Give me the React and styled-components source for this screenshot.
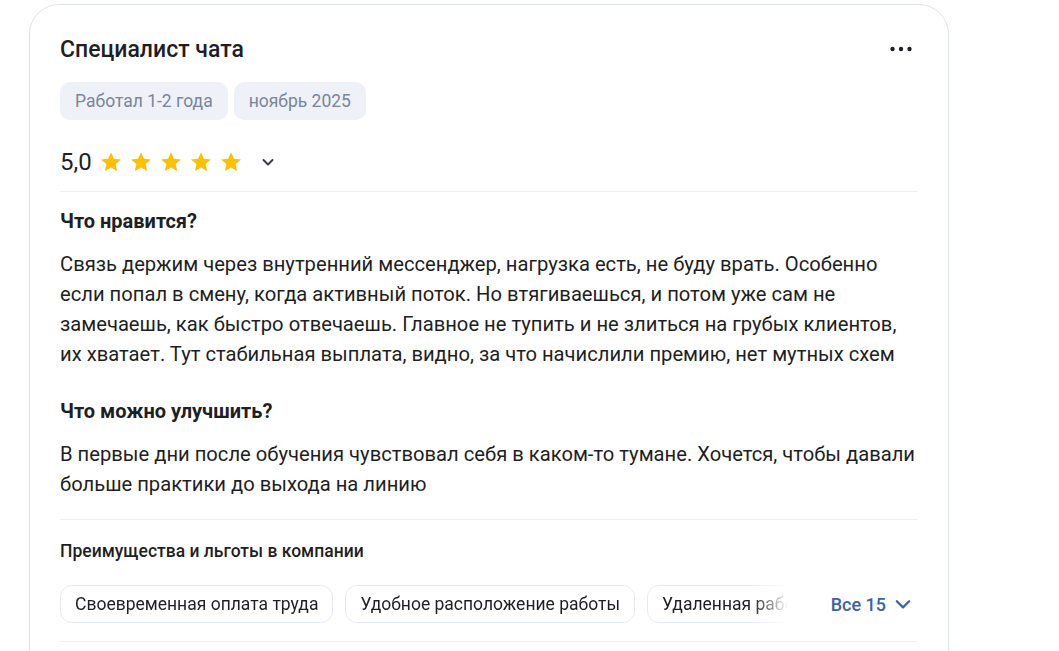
import styled, { createGlobalStyle } from "styled-components";

const GlobalStyle = createGlobalStyle`
    body {
        margin: 0;
        background: #ffffff;
        font-family: Roboto, "Noto Sans", sans-serif;
        color: #1e1f24;
    }
`;

const benefits = [
    "Своевременная оплата труда",
    "Удобное расположение работы",
    "Удаленная работа",
    "Гибкий график",
];

const Star = () => (
    <svg width="24" height="24" viewBox="0 0 24 24">
        <path
            d="M12 2.2l2.9 6.6 7.1.6-5.4 4.7 1.6 7-6.2-3.7-6.2 3.7 1.6-7L2 9.4l7.1-.6z"
            fill="#ffc000"
        />
    </svg>
);

const Chevron = ({ color = "#3a3d44", size = 16, width = 2 }) => (
    <svg width={size} height={size} viewBox="0 0 16 16">
        <path d="M3.5 6l4.5 4.5L12.5 6" fill="none" stroke={color} strokeWidth={width} strokeLinecap="round" strokeLinejoin="round" />
    </svg>
);

const WideChevron = ({ color }) => (
    <svg width="18" height="18" viewBox="0 0 16 16">
        <path d="M2.5 5.5l5.5 5.5 5.5-5.5" fill="none" stroke={color} strokeWidth="2" strokeLinecap="round" strokeLinejoin="round" />
    </svg>
);

const App = () => {
    return (
        <>
            <GlobalStyle />
            <Card>
                <Header>
                    <Title>Специалист чата</Title>
                    <MoreButton>
                        <svg width="24" height="24" viewBox="0 0 24 24">
                            <circle cx="3.5" cy="12" r="2.2" fill="#1e1f24" />
                            <circle cx="12" cy="12" r="2.2" fill="#1e1f24" />
                            <circle cx="20.5" cy="12" r="2.2" fill="#1e1f24" />
                        </svg>
                    </MoreButton>
                </Header>
                <Tags>
                    <Tag>Работал 1-2 года</Tag>
                    <Tag>ноябрь 2025</Tag>
                </Tags>
                <RatingRow>
                    <Score>5,0</Score>
                    <Stars>
                        {[0, 1, 2, 3, 4].map((i) => <Star key={i} />)}
                    </Stars>
                    <ExpandIcon>
                        <Chevron />
                    </ExpandIcon>
                </RatingRow>
                <Divider />
                <Section>
                    <SectionTitle>Что нравится?</SectionTitle>
                    <Text>
                        Связь держим через внутренний мессенджер, нагрузка есть, не буду врать. Особенно
                        если попал в смену, когда активный поток. Но втягиваешься, и потом уже сам не
                        замечаешь, как быстро отвечаешь. Главное не тупить и не злиться на грубых клиентов,
                        их хватает. Тут стабильная выплата, видно, за что начислили премию, нет мутных схем
                    </Text>
                </Section>
                <Section $gap>
                    <SectionTitle>Что можно улучшить?</SectionTitle>
                    <Text>
                        В первые дни после обучения чувствовал себя в каком-то тумане. Хочется, чтобы давали
                        больше практики до выхода на линию
                    </Text>
                </Section>
                <Divider $top={20} />
                <BenefitsTitle>Преимущества и льготы в компании</BenefitsTitle>
                <BenefitsRow>
                    <BenefitsScroller>
                        {benefits.map((b) => (
                            <Benefit key={b}>{b}</Benefit>
                        ))}
                    </BenefitsScroller>
                    <AllButton>
                        Все 15
                        <WideChevron color="#3a63a8" />
                    </AllButton>
                </BenefitsRow>
                <Divider $top={18} />
            </Card>
        </>
    );
};

const Card = styled.div`
    box-sizing: border-box;
    width: 920px;
    margin: 4px 0 0 29px;
    padding: 30px 30px 40px;
    border: 1px solid #dfe4ec;
    border-radius: 30px;
    background: #fff;
`;

const Header = styled.div`
    display: flex;
    align-items: center;
    justify-content: space-between;
    height: 30px;
`;

const Title = styled.div`
    font-size: 23px;
    font-weight: 500;
    line-height: 30px;
    color: #1e1f24;
`;

const MoreButton = styled.div`
    display: flex;
    align-items: center;
    margin-right: 5px;
    margin-top: -2px;
`;

const Tags = styled.div`
    display: flex;
    gap: 6px;
    margin-top: 17px;
`;

const Tag = styled.div`
    display: flex;
    align-items: center;
    height: 38px;
    padding: 0 15px;
    border-radius: 10px;
    background: #eef1f7;
    color: #79859a;
    font-size: 17.5px;
`;

const RatingRow = styled.div`
    display: flex;
    align-items: center;
    height: 32px;
    margin-top: 26px;
`;

const Score = styled.div`
    font-size: 24px;
    line-height: 32px;
    color: #1e1f24;
    margin-right: 7px;
`;

const Stars = styled.div`
    display: flex;
    gap: 6px;
`;

const ExpandIcon = styled.div`
    display: flex;
    margin-left: 17px;
`;

const Divider = styled.div`
    height: 1px;
    background: #eef0f4;
    margin-top: ${(p) => (p.$top ?? 13)}px;
`;

const Section = styled.div`
    padding-top: ${(p) => (p.$gap ? 30 : 17)}px;
`;

const SectionTitle = styled.div`
    font-size: 20px;
    font-weight: 700;
    line-height: 24px;
    color: #1e1f24;
`;

const Text = styled.p`
    margin: 16px 0 0;
    font-size: 20.2px;
    line-height: 30px;
    color: #1e1f24;
`;

const BenefitsTitle = styled.div`
    margin-top: 20px;
    font-size: 17.5px;
    font-weight: 500;
    line-height: 22px;
    color: #1e1f24;
`;

const BenefitsRow = styled.div`
    display: flex;
    align-items: center;
    margin-top: 23px;
`;

const BenefitsScroller = styled.div`
    flex: 1;
    display: flex;
    gap: 12px;
    overflow: hidden;
    mask-image: linear-gradient(to right, #000 calc(100% - 40px), transparent calc(100% - 5px));
`;

const Benefit = styled.div`
    flex: none;
    display: flex;
    align-items: center;
    height: 36px;
    padding: 0 14px;
    border: 1px solid #e6eaf2;
    border-radius: 12px;
    font-size: 17.5px;
    color: #1e1f24;
    white-space: nowrap;
`;

const AllButton = styled.div`
    display: flex;
    align-items: center;
    gap: 8px;
    margin-left: 38px;
    margin-right: 6px;
    font-size: 18px;
    font-weight: 500;
    color: #3a63a8;
`;

export default App;
